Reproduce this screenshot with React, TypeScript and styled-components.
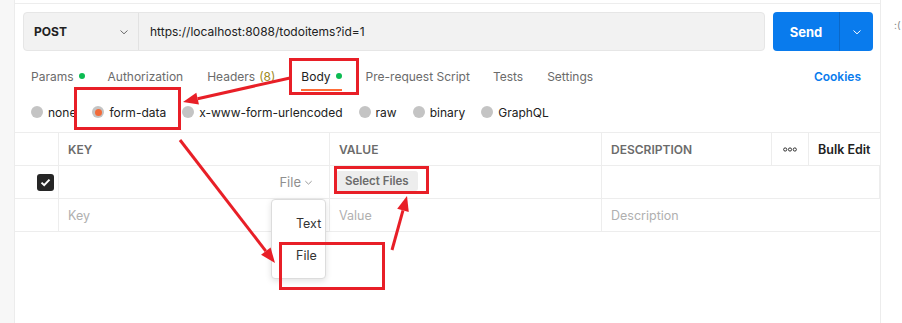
import React from 'react'
import styled, {createGlobalStyle} from 'styled-components'

const GlobalStyle = createGlobalStyle`
  html, body { margin: 0; padding: 0; background: #fff; }
  body { font-family: Inter, "Noto Sans", sans-serif; -webkit-font-smoothing: antialiased; }
  * { box-sizing: border-box; }
`

const Page = styled.div`
  position: relative;
  width: 902px;
  height: 323px;
  overflow: hidden;
  display: grid;
  grid-template-columns: 15px 865px 22px;
`
const LeftStrip = styled.div`
  background: #f7f7f7;
  border-right: 1px solid #ececec;
`
const RightStrip = styled.div`
  border-left: 1px solid #ececec;
  padding: 19px 0 0 13px;
  font-size: 10px;
  color: #8a8a8a;
  overflow: hidden;
  white-space: nowrap;
`
const Main = styled.div`
  margin-top: 3px;
  border-top: 1px solid #ededed;
  display: flex;
  flex-direction: column;
`

/* ---------- request bar ---------- */
const RequestBar = styled.div`
  display: flex;
  gap: 8px;
  padding: 8px 7px 0 8px;
`
const UrlGroup = styled.div`
  flex: 1;
  display: flex;
  height: 39px;
  background: #f2f2f2;
  border: 1px solid #e6e6e6;
  border-radius: 4px;
`
const Method = styled.div`
  width: 115px;
  display: flex;
  align-items: center;
  justify-content: space-between;
  padding: 0 9px 0 10px;
  border-right: 1px solid #e2e2e2;
  font-size: 12px;
  font-weight: 700;
  color: #212121;
`
const UrlText = styled.div`
  display: flex;
  align-items: center;
  padding-left: 11px;
  font-size: 12px;
  color: #212121;
`
const SendButton = styled.div`
  width: 100px;
  height: 39px;
  display: flex;
  background: #097bed;
  border-radius: 4px;
  color: #fff;
`
const SendLabel = styled.div`
  width: 67px;
  display: flex;
  align-items: center;
  justify-content: center;
  font-size: 13px;
  font-weight: 700;
  border-right: 1px solid #0a68c9;
`
const SendCaret = styled.div`
  flex: 1;
  display: flex;
  align-items: center;
  justify-content: center;
`

const Chevron = ({color = '#6b6b6b', size = 10}: {color?: string, size?: number}) =>
  <svg width={size} height={size} viewBox="0 0 10 10">
    <path d="M1.5 3.5 L5 6.8 L8.5 3.5" fill="none" stroke={color} strokeWidth="1" />
  </svg>

/* ---------- tabs ---------- */
const TabBar = styled.div`
  display: flex;
  align-items: center;
  height: 50px;
  padding: 0 19px 0 16px;
`
const Tab = styled.div<{ $active?: boolean, $space?: number }>`
  position: relative;
  display: flex;
  align-items: center;
  height: 100%;
  margin-right: ${p => p.$space ?? 24}px;
  font-size: 12px;
  color: ${p => p.$active ? '#212121' : '#6b6b6b'};
  &::after {
    content: '';
    display: ${p => p.$active ? 'block' : 'none'};
    position: absolute;
    left: 0;
    right: 0;
    bottom: 10px;
    height: 2px;
    background: #ff6c37;
  }
`
const Dot = styled.span`
  width: 6px;
  height: 6px;
  border-radius: 50%;
  background: #0cbb52;
  margin-left: 5px;
`
const Count = styled.span`
  color: #a08a1e;
  margin-left: 4px;
`
const Cookies = styled.div`
  margin-left: auto;
  font-size: 12px;
  font-weight: 600;
  color: #097bed;
`

/* ---------- body type radios ---------- */
const RadioRow = styled.div`
  display: flex;
  align-items: center;
  gap: 16px;
  height: 22px;
  padding-left: 16px;
`
const RadioItem = styled.div`
  display: flex;
  align-items: center;
  gap: 5px;
  font-size: 12px;
  color: #212121;
`
const Radio = styled.span<{ $checked?: boolean }>`
  width: 12px;
  height: 12px;
  border-radius: 50%;
  background: #c4c4c4;
  display: flex;
  align-items: center;
  justify-content: center;
  &::after {
    content: '';
    display: ${p => p.$checked ? 'block' : 'none'};
    width: 7px;
    height: 7px;
    border-radius: 50%;
    background: #f26b3a;
  }
`

/* ---------- params table ---------- */
const Table = styled.div`
  margin-top: 9px;
  display: grid;
  grid-template-columns: 44px 271px 272px 170px 37px 71px;
  border-top: 1px solid #ededed;
`
const Cell = styled.div<{ $span?: number, $right?: boolean }>`
  height: 33px;
  display: flex;
  align-items: center;
  justify-content: ${p => p.$right ? 'flex-end' : 'flex-start'};
  padding: 0 9px;
  border-bottom: 1px solid #ededed;
  border-right: 1px solid #ededed;
  grid-column: span ${p => p.$span ?? 1};
  font-size: 12.5px;
  &:last-child { border-right: none; }
`
const HeadCell = styled(Cell)`
  font-size: 12px;
  font-weight: 600;
  color: #6b6b6b;
  text-transform: uppercase;
`
const BulkEdit = styled(Cell)`
  font-size: 12.5px;
  font-weight: 600;
  color: #212121;
  border-right: none;
`
const Placeholder = styled.span`
  color: #b0b0b0;
`
const CheckCell = styled(Cell)`
  padding: 0 0 0 22px;
`
const Checkbox = styled.span`
  flex-shrink: 0;
  width: 17px;
  height: 17px;
  border-radius: 3px;
  background: #262626;
  display: flex;
  align-items: center;
  justify-content: center;
`
const TypeSelect = styled.span`
  display: flex;
  align-items: center;
  gap: 3px;
  margin-right: 7px;
  font-size: 13px;
  color: #8f8f8f;
`
const SelectFiles = styled.span`
  margin-left: -3px;
  margin-top: -2px;
  padding: 3px 9px;
  border-radius: 3px;
  background: #ededed;
  font-size: 11.5px;
  font-weight: 600;
  color: #6b6b6b;
`
const MoreCell = styled(HeadCell)`
  justify-content: center;
`

/* ---------- overlays ---------- */
const Menu = styled.div`
  position: absolute;
  left: 271px;
  top: 199px;
  width: 55px;
  height: 80px;
  background: #fff;
  border: 1px solid #dcdcdc;
  border-radius: 4px;
  box-shadow: 0 2px 6px rgba(0, 0, 0, 0.12);
  padding-top: 16px;
`
const MenuItem = styled.div`
  height: 32px;
  padding-left: 24px;
  font-size: 12.5px;
  color: #333;
`
const Marks = styled.svg`
  position: absolute;
  left: 0;
  top: 0;
  pointer-events: none;
`

const RED = '#e81f27'

const Arrow = ({x1, y1, x2, y2}: {x1: number, y1: number, x2: number, y2: number}) => {
  const a = Math.atan2(y2 - y1, x2 - x1)
  const len = 15, half = 6
  const bx = x2 - Math.cos(a) * len, by = y2 - Math.sin(a) * len
  const px = -Math.sin(a) * half, py = Math.cos(a) * half
  return <g>
    <line x1={x1} y1={y1} x2={bx} y2={by} stroke={RED} strokeWidth="3" />
    <polygon points={`${x2},${y2} ${bx + px},${by + py} ${bx - px},${by - py}`} fill={RED} />
  </g>
}

const boxes = [
  {x: 290.5, y: 59.5, w: 67, h: 34},
  {x: 75.5, y: 88.5, w: 104, h: 40},
  {x: 335.5, y: 167.5, w: 92, h: 25},
  {x: 280.5, y: 243.5, w: 103, h: 45},
]

const radios = ['none', 'form-data', 'x-www-form-urlencoded', 'raw', 'binary', 'GraphQL']

export default function App() {
  return <>
    <GlobalStyle/>
    <Page>
      <LeftStrip/>
      <Main>
        <RequestBar>
          <UrlGroup>
            <Method>POST<Chevron/></Method>
            <UrlText>https://localhost:8088/todoitems?id=1</UrlText>
          </UrlGroup>
          <SendButton>
            <SendLabel>Send</SendLabel>
            <SendCaret><Chevron color="#fff"/></SendCaret>
          </SendButton>
        </RequestBar>

        <TabBar>
          <Tab $space={23}>Params<Dot/></Tab>
          <Tab>Authorization</Tab>
          <Tab $space={26}>Headers<Count>(8)</Count></Tab>
          <Tab $active>Body<Dot/></Tab>
          <Tab $space={23}>Pre-request Script</Tab>
          <Tab>Tests</Tab>
          <Tab>Settings</Tab>
          <Cookies>Cookies</Cookies>
        </TabBar>

        <RadioRow>
          {radios.map(r => <RadioItem key={r}>
            <Radio $checked={r === 'form-data'}/>{r}
          </RadioItem>)}
        </RadioRow>

        <Table>
          <HeadCell/>
          <HeadCell>Key</HeadCell>
          <HeadCell>Value</HeadCell>
          <HeadCell>Description</HeadCell>
          <MoreCell>
            <svg width="14" height="5" viewBox="0 0 14 5">
              {[2.2, 7, 11.8].map(cx => <circle key={cx} cx={cx} cy="2.5" r="1.6" fill="none" stroke="#333" strokeWidth="1" />)}
            </svg>
          </MoreCell>
          <BulkEdit>Bulk Edit</BulkEdit>

          <CheckCell>
            <Checkbox>
              <svg width="11" height="9" viewBox="0 0 11 9">
                <path d="M1.5 4.6 L4.2 7.2 L9.5 1.6" fill="none" stroke="#fff" strokeWidth="2" />
              </svg>
            </Checkbox>
          </CheckCell>
          <Cell $right><TypeSelect>File<Chevron color="#8f8f8f" size={9}/></TypeSelect></Cell>
          <Cell><SelectFiles>Select Files</SelectFiles></Cell>
          <Cell $span={3}/>

          <Cell/>
          <Cell><Placeholder>Key</Placeholder></Cell>
          <Cell><Placeholder>Value</Placeholder></Cell>
          <Cell $span={3}><Placeholder>Description</Placeholder></Cell>
        </Table>
      </Main>
      <RightStrip>:(</RightStrip>

      <Menu>
        <MenuItem>Text</MenuItem>
        <MenuItem>File</MenuItem>
      </Menu>

      <Marks width="902" height="323">
        {boxes.map((b, i) =>
          <rect key={i} x={b.x} y={b.y} width={b.w} height={b.h} fill="none" stroke={RED} strokeWidth="3" />)}
        <Arrow x1={290} y1={78} x2={183} y2={102}/>
        <Arrow x1={180} y1={140} x2={275} y2={263}/>
        <Arrow x1={392} y1={250} x2={407} y2={196}/>
      </Marks>
    </Page>
  </>
}
